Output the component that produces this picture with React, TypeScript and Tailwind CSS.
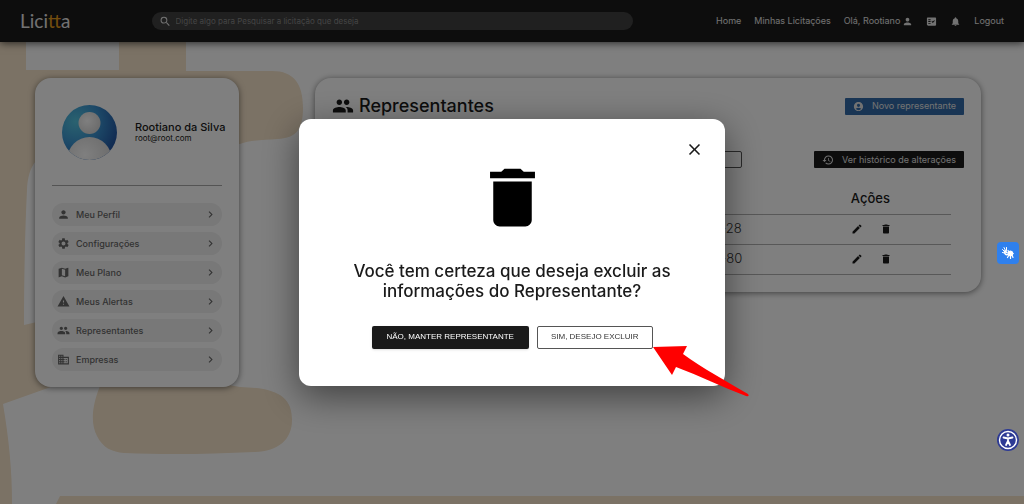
import { ReactNode } from "react";
import {
    MdAccountCircle,
    MdBusiness,
    MdChevronRight,
    MdClose,
    MdDelete,
    MdEdit,
    MdFactCheck,
    MdGroup,
    MdHistory,
    MdMap,
    MdNotifications,
    MdPerson,
    MdSearch,
    MdSettings,
    MdWarning,
} from "react-icons/md";

const menuItems = [
    { label: "Meu Perfil", icon: MdPerson },
    { label: "Configurações", icon: MdSettings },
    { label: "Meu Plano", icon: MdMap },
    { label: "Meus Alertas", icon: MdWarning },
    { label: "Representantes", icon: MdGroup },
    { label: "Empresas", icon: MdBusiness },
];

const rows = ["-28", "-80"];

function Background() {
    return (
        <svg
            className="absolute left-0 top-0"
            width="1024"
            height="504"
            viewBox="0 0 1024 504"
            fill="#f6e4ca"
            aria-hidden="true"
        >
            <path d="M0 0H26V70H119V0H186V71H272C294 71 303 84 303 108C303 132 294 138 278 139C262 140 250 140 240 144L60 150C38 152 28 165 27 190C25 230 24 280 24 325L110 305V364L48 388L3 404C9 440 12 470 12 504H0Z" />
            <path d="M100 386C91 408 91 425 97 436C103 448 112 452 124 453C170 455 210 454 255 452C278 451 292 440 292 420C292 397 278 388 240 387L200 380Z" />
            <path d="M60 496H1024V504H56Z" />
        </svg>
    );
}

function Header() {
    return (
        <header className="relative flex h-[42px] items-center bg-[#1a1a1a] px-5 text-[#e5e5e5] shadow-[0_1px_8px_rgba(0,0,0,0.7)]">
            <a href="#" className="w-[132px] font-[Lato] text-[19px] leading-5">
                Lici<span className="text-[#e59a1c]">tt</span>a
            </a>
            <label className="flex h-[18px] w-[481px] items-center gap-1 rounded-full bg-[#404040] px-[7px]">
                <MdSearch size={13} />
                <input
                    type="text"
                    aria-label="Pesquisar"
                    placeholder="Digite algo para Pesquisar a licitação que deseja"
                    className="w-full bg-transparent text-[8px] outline-none placeholder:text-[#8a8a8a]"
                />
            </label>
            <nav className="ml-auto flex items-center gap-[13px] text-[9px]">
                <a href="#">Home</a>
                <a href="#">Minhas Licitações</a>
                <a href="#" className="flex items-center gap-0.5">
                    Olá, Rootiano <MdPerson size={11} />
                </a>
                <a href="#" aria-label="Tarefas">
                    <MdFactCheck size={11} />
                </a>
                <a href="#" aria-label="Notificações">
                    <MdNotifications size={11} />
                </a>
                <a href="#">Logout</a>
            </nav>
        </header>
    );
}

function Avatar() {
    return (
        <svg width="55" height="55" viewBox="0 0 55 55" className="shrink-0" aria-hidden="true">
            <defs>
                <radialGradient id="sky" cx="0.25" cy="0.3" r="0.85">
                    <stop offset="0" stopColor="#55c5e0" />
                    <stop offset="0.5" stopColor="#3a92d0" />
                    <stop offset="1" stopColor="#204f9e" />
                </radialGradient>
                <radialGradient id="skin" cx="0.4" cy="0.4" r="0.7">
                    <stop offset="0" stopColor="#ffffff" />
                    <stop offset="1" stopColor="#d4d4d4" />
                </radialGradient>
                <clipPath id="round">
                    <circle cx="27.5" cy="27.5" r="27.5" />
                </clipPath>
            </defs>
            <g clipPath="url(#round)">
                <rect width="55" height="55" fill="url(#sky)" />
                <circle cx="27.5" cy="18" r="11" fill="url(#skin)" />
                <circle cx="27.5" cy="54" r="22" fill="url(#skin)" />
            </g>
        </svg>
    );
}

function Sidebar() {
    return (
        <aside className="w-[204px] shrink-0 rounded-2xl bg-white px-[17px] pb-4 pt-[27px] shadow-[0_1px_6px_rgba(0,0,0,0.5)]">
            <div className="flex items-center gap-[18px] pl-[10px]">
                <Avatar />
                <div className="whitespace-nowrap">
                    <p className="text-[11px] font-medium leading-3">Rootiano da Silva</p>
                    <p className="text-[8px] leading-[11px]">root@root.com</p>
                </div>
            </div>
            <hr className="mb-[17px] mt-[25px] border-[#a8a8a8]" />
            <nav className="flex flex-col gap-1.5">
                {menuItems.map(({ label, icon: Icon }) => (
                    <a
                        key={label}
                        href="#"
                        className="flex h-[23px] items-center gap-1.5 rounded-full bg-[#f0f0f0] px-[5px] text-[9px] font-medium text-[#666666]"
                    >
                        <Icon size={13} />
                        {label}
                        <MdChevronRight size={13} className="ml-auto" />
                    </a>
                ))}
            </nav>
        </aside>
    );
}

function ActionButton({ className, children }: { className: string; children: ReactNode }) {
    return (
        <button
            className={`flex h-[17px] items-center gap-2 whitespace-nowrap rounded-[1px] px-2 text-[9px] text-[#e5e5e5] ${className}`}
        >
            {children}
        </button>
    );
}

function Representatives() {
    return (
        <main className="min-w-0 flex-1 rounded-2xl bg-white px-[17px] pb-[17px] pt-[17px] shadow-[0_1px_6px_rgba(0,0,0,0.5)]">
            <div className="flex items-center justify-between">
                <h1 className="flex items-center gap-[5px] text-[18px] font-medium leading-5">
                    <MdGroup size={22} />
                    Representantes
                </h1>
                <ActionButton className="bg-[#326aa8]">
                    <MdAccountCircle size={11} />
                    Novo representante
                </ActionButton>
            </div>
            <div className="mt-[34px] flex items-center justify-between">
                <input
                    type="text"
                    aria-label="Buscar representante"
                    className="h-[17px] w-[410px] rounded-[2px] border border-[#555555]"
                />
                <ActionButton className="bg-[#1a1a1a]">
                    <MdHistory size={12} />
                    Ver histórico de alterações
                </ActionButton>
            </div>
            <div className="pl-3 pr-[13px]">
                <table className="mt-4 w-full table-fixed text-left">
                    <thead>
                        <tr className="h-[30px] border-b border-[#b0b0b0] text-[13px] font-medium">
                            <th className="w-[62%]" />
                            <th className="w-[21.5%]" />
                            <th className="font-medium">Ações</th>
                        </tr>
                    </thead>
                    <tbody>
                        {rows.map((suffix) => (
                            <tr key={suffix} className="h-[30px] border-b border-[#b0b0b0]">
                                <td />
                                <td className="text-[13px] font-light text-[#333333]">{suffix}</td>
                                <td>
                                    <div className="flex gap-[17px]">
                                        <button aria-label="Editar">
                                            <MdEdit size={12} />
                                        </button>
                                        <button aria-label="Excluir">
                                            <MdDelete size={12} />
                                        </button>
                                    </div>
                                </td>
                            </tr>
                        ))}
                    </tbody>
                </table>
            </div>
        </main>
    );
}

function DeleteDialog() {
    return (
        <div className="fixed inset-0 flex items-center justify-center bg-black/50">
            <div
                role="dialog"
                aria-modal="true"
                aria-labelledby="dialog-title"
                className="relative flex w-[426px] flex-col items-center rounded-xl bg-white px-10 pb-[37px] pt-10 shadow-[0_10px_36px_rgba(0,0,0,0.5)]"
            >
                <button aria-label="Fechar" className="absolute right-[21px] top-[21px]">
                    <MdClose size={19} />
                </button>
                <MdDelete size={77} className="text-black" />
                <h2 id="dialog-title" className="mt-[25px] text-center text-[17px] font-medium leading-5">
                    Você tem certeza que deseja excluir as
                    <br />
                    informações do Representante?
                </h2>
                <div className="mt-[25px] flex gap-2 font-['Liberation_Sans'] text-[8px]">
                    <button className="h-[23px] rounded-[2px] bg-[#1a1a1a] px-[15px] text-white shadow-sm">
                        NÃO, MANTER REPRESENTANTE
                    </button>
                    <button className="h-[23px] rounded-[2px] border border-[#555555] px-[13px] text-[#333333]">
                        SIM, DESEJO EXCLUIR
                    </button>
                </div>
                <svg
                    className="absolute left-[353px] top-[225px]"
                    width="98"
                    height="54"
                    viewBox="0 0 98 54"
                    fill="#ff0000"
                    aria-hidden="true"
                >
                    <path d="M1 3L35 2L31 10C50 24 76 38 96 50Q98 53 94 52C70 43 48 32 24 23L20 31Z" />
                </svg>
            </div>
        </div>
    );
}

function FloatingTools() {
    return (
        <>
            <button
                aria-label="Libras"
                className="fixed right-[5px] top-[242px] flex size-[22px] items-center justify-center rounded-[4px] bg-[#2f80ed]"
            >
                <svg width="14" height="14" viewBox="0 0 14 14" fill="none" stroke="#ffffff" strokeLinecap="round">
                    <path d="M3.500 5.500C3.500 8 5 9 6.500 8.500M3.500 5L6 6.500" strokeWidth="1.500" />
                    <path d="M1.500 3.500L3.500 5.500M3 1.500L4.500 4.500M5.500 1.500L5.500 4.500M1.500 6.500L3.500 7" strokeWidth="1" />
                    <ellipse cx="9.500" cy="7.500" rx="2.500" ry="2.500" fill="#ffffff" />
                    <path d="M8 9L6.500 11.500M9.500 9L9.500 12.500M11 9L12 11.500M8 6L7 4.500" strokeWidth="1.200" />
                </svg>
            </button>
            <button aria-label="Acessibilidade" className="fixed right-[5px] top-[429px]">
                <svg width="22" height="22" viewBox="0 0 22 22">
                    <circle cx="11" cy="11" r="11" fill="#2d3a94" />
                    <circle cx="11" cy="11" r="8.500" fill="none" stroke="#ffffff" strokeWidth="1.400" />
                    <circle cx="11" cy="6" r="1.500" fill="#ffffff" />
                    <path
                        d="M6.500 8.500L11 9.500L15.500 8.500M11 9.500V12L9 16M11 12L13 16"
                        fill="none"
                        stroke="#ffffff"
                        strokeWidth="1.800"
                        strokeLinecap="round"
                    />
                </svg>
            </button>
        </>
    );
}

export default function App() {
    return (
        <div className="relative min-h-screen overflow-hidden bg-white font-[Inter,sans-serif] text-[#1a1a1a]">
            <Background />
            <Header />
            <div className="relative flex items-start gap-[76px] pb-10 pl-[35px] pr-[43px] pt-9">
                <Sidebar />
                <Representatives />
            </div>
            <DeleteDialog />
            <FloatingTools />
        </div>
    );
}
